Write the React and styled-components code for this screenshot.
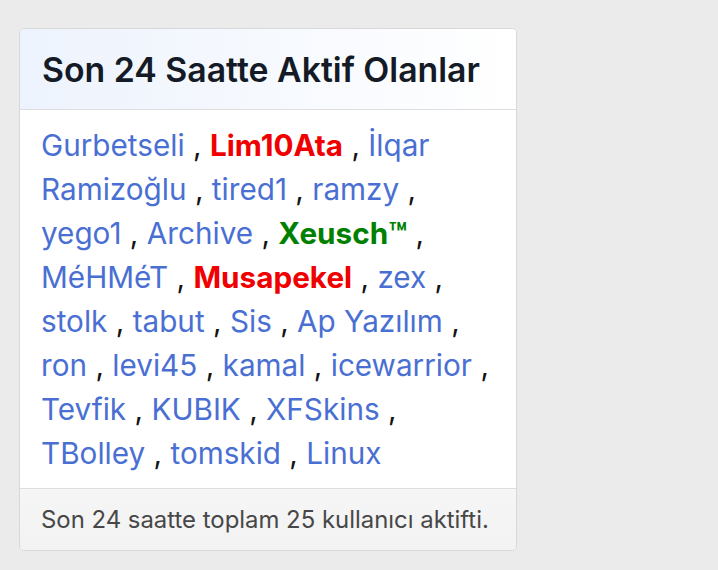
import React from "react";
import styled, { createGlobalStyle } from "styled-components";

const Global = createGlobalStyle`
  html, body { margin: 0; padding: 0; background: #ebebeb; }
  body { font-family: Inter, "Noto Sans", sans-serif; }
`;

const Page = styled.div`
  padding: 28px 0 0 19px;
  width: 718px;
  height: 570px;
  box-sizing: border-box;
`;

const Card = styled.section`
  width: 498px;
  box-sizing: border-box;
  border: 1px solid #d8d8d8;
  border-radius: 5px;
  background: #fff;
  overflow: hidden;
`;

const Header = styled.h3`
  margin: 0;
  height: 80px;
  display: flex;
  align-items: center;
  padding: 0 22px;
  font-size: 33.8px;
  font-weight: 600;
  color: #141b26;
  background: linear-gradient(to right, #edf3fd, #ffffff);
  border-bottom: 1px solid #dedede;
`;

const Body = styled.div`
  padding: 13px 20px 13px 21px;
  font-size: 29.7px;
  line-height: 44px;
  color: #141414;
`;

const Name = styled.a`
  text-decoration: none;
  color: ${(p) => (p.$role === "admin" ? "#f00000" : p.$role === "mod" ? "#008000" : "#4a6fd3")};
  font-weight: ${(p) => (p.$role ? 700 : 400)};
`;

const Footer = styled.div`
  border-top: 1px solid #dedede;
  background: linear-gradient(#f6f6f6, #f2f2f2);
  padding: 0 21px;
  height: 61px;
  display: flex;
  align-items: center;
  font-size: 23.9px;
  color: #474747;
`;

const users = [
  ["Gurbetseli"], ["Lim10Ata", "admin"], ["İlqar Ramizoğlu"], ["tired1"], ["ramzy"],
  ["yego1"], ["Archive"], ["Xeusch™", "mod"], ["MéHMéT"], ["Musapekel", "admin"],
  ["zex"], ["stolk"], ["tabut"], ["Sis"], ["Ap Yazılım"], ["ron"], ["levi45"],
  ["kamal"], ["icewarrior"], ["Tevfik"], ["KUBIK"], ["XFSkins"], ["TBolley"],
  ["tomskid"], ["Linux"],
];

export default function App() {
  return (
    <>
      <Global />
      <Page>
        <Card>
          <Header>Son 24 Saatte Aktif Olanlar</Header>
          <Body>
            {users.map(([n, r], i) => (
              <React.Fragment key={n}>
                <Name href="#" $role={r}>{n}</Name>
                {i < users.length - 1 ? " , " : ""}
              </React.Fragment>
            ))}
          </Body>
          <Footer>Son 24 saatte toplam 25 kullanıcı aktifti.</Footer>
        </Card>
      </Page>
    </>
  );
}
